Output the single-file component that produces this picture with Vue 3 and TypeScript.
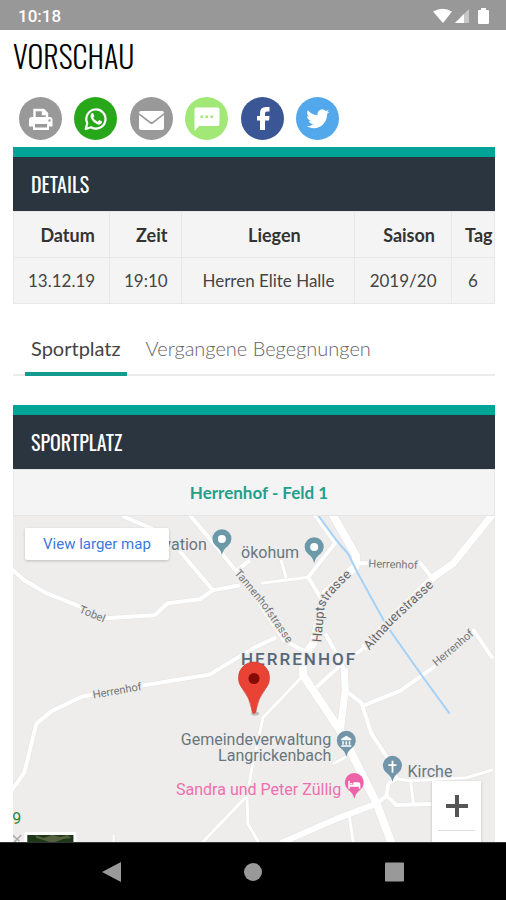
<script setup lang="ts">
import { ref } from 'vue'

interface Match {
  date: string
  time: string
  league: string
  season: string
  day: number
}

interface Road {
  d: string
  w: number
}

const columns = ['Datum', 'Zeit', 'Liegen', 'Saison', 'Tag']
const match: Match = {
  date: '13.12.19',
  time: '19:10',
  league: 'Herren Elite Halle',
  season: '2019/20',
  day: 6,
}

const tabs = ['Sportplatz', 'Vergangene Begegnungen']
const activeTab = ref(0)

const roads: Road[] = [
  { d: 'M10 567L25 580L47 593L80 606L92 616L105 618L155 615L168 603L200 599L213 590L240 585', w: 4 },
  { d: 'M123 516L153 529L175 545L213 590', w: 4 },
  { d: 'M189 514L217 547L237 572L253 594L284 640L303 650', w: 4 },
  { d: 'M236 571L250 560', w: 4 },
  { d: 'M314 514L335 543L308 577L322 600', w: 4 },
  { d: 'M261 583L308 577M281 560L286 578', w: 3 },
  { d: 'M332 514L356 556L355 567L325 593L321 610L313 643L303 657L303 675L340 730L376 802L391 842', w: 8 },
  { d: 'M356 563L420 563L431 577', w: 4 },
  { d: 'M493 513L453 563L433 577L386 623L363 648', w: 7 },
  { d: 'M363 648L343 662L316 687', w: 4 },
  { d: 'M325 633L336 653L344 670', w: 4 },
  { d: 'M344 668L345 690L340 730', w: 7 },
  { d: 'M363 705L400 690L433 667L473 630L492 658', w: 4 },
  { d: 'M348 692L361 702L371 733L391 763L396 778L388 783L386 795L396 804L431 803', w: 4 },
  { d: 'M396 778L410 780L413 803M410 780L466 777L492 769', w: 3 },
  { d: 'M386 795L376 803', w: 4 },
  { d: 'M376 803L336 818L281 842', w: 6 },
  { d: 'M349 815L353 842', w: 3 },
  { d: 'M333 763L346 756', w: 3 },
  { d: 'M303 675L263 717L258 740L252 767L247 797L248 823L259 842M247 795L202 842', w: 3 },
  { d: 'M10 793L25 772L37 723L53 710L83 696L143 685L210 674L253 648L276 637', w: 4 },
  { d: 'M114 834L114 842', w: 2 },
]
</script>

<template>
  <div class="screen">
    <div class="status">
      <span>10:18</span>
      <svg class="status-icons" viewBox="0 0 58 18" aria-hidden="true">
        <path d="M1 4.500Q10.500 -1 20 4.500L11 16Z" />
        <path d="M23 16L37 2V16Z" opacity=".45" />
        <path d="M23 16L32 7V16Z" />
        <path d="M47 3H49V1H54V3H56Q57 3 57 4V16Q57 17 56 17H47Q46 17 46 16V4Q46 3 47 3Z" />
      </svg>
    </div>

    <main class="page">
      <h1>VORSCHAU</h1>

      <nav class="share" aria-label="Teilen">
        <a href="#" class="grey" aria-label="Drucken">
          <svg viewBox="0 0 43 43">
            <path d="M15.500 22V13H24.500L28 16.500V22M24 13V17H28" fill="none" stroke="#fff" stroke-width="2.400" />
            <path fill-rule="evenodd" d="M13 20H30.500Q33.500 20 33.500 23V29.500H30V33H14V29.500H10V23Q10 20 13 20ZM16 27V30.500H28V27ZM30.500 22.300A1.200 1.200 0 1 0 30.500 24.700A1.200 1.200 0 1 0 30.500 22.300Z" />
          </svg>
        </a>
        <a href="#" class="whatsapp" aria-label="WhatsApp">
          <svg viewBox="0 0 43 43">
            <path d="M11.700 32L13.300 26.300A9.600 9.600 0 1 1 17 30.300Z" fill="none" stroke="#fff" stroke-width="2.200" stroke-linejoin="round" />
            <path d="M17.600 16.300Q18.900 15.600 19.400 16.800L20.300 19Q20.300 19.600 19.200 20.700Q20.800 23.700 23.700 24.700L25.200 23.100L28 24.500Q28.400 26.700 26 27.600Q23.600 28.300 19.500 24.800Q14.600 19.500 17.600 16.300Z" />
          </svg>
        </a>
        <a href="#" class="grey" aria-label="E-Mail">
          <svg viewBox="0 0 43 43">
            <path d="M11 14H32Q34 14 34 16L22.500 24.800Q21.500 25.500 20.500 24.800L9 16Q9 14 11 14Z" />
            <path d="M9 18L20 26.500Q21.500 27.500 23 26.500L34 18V31Q34 33 32 33H11Q9 33 9 31Z" />
          </svg>
        </a>
        <a href="#" class="sms" aria-label="SMS">
          <svg viewBox="0 0 43 43">
            <path fill-rule="evenodd" d="M11 10.500H32.500Q34.500 10.500 34.500 12.500V27Q34.500 29 32.500 29H14L9.500 34V12.500Q9.500 10.500 11 10.500ZM15.500 18.500V21H18V18.500ZM20.500 18.500V21H23V18.500ZM25.500 18.500V21H28V18.500Z" />
          </svg>
        </a>
        <a href="#" class="facebook" aria-label="Facebook">
          <svg viewBox="0 0 43 43">
            <path d="M19 33V23.500H16V19H19V16Q19 10 25 10H28.500V14.500H26Q24 14.500 24 16.500V19H28.500L28 23.500H24V33Z" />
          </svg>
        </a>
        <a href="#" class="twitter" aria-label="Twitter">
          <svg viewBox="0 0 24 24">
            <path transform="translate(5.700 5.700) scale(.54)" d="M23.950 4.570a10 10 0 0 1-2.820.770 4.960 4.960 0 0 0 2.160-2.720c-.95.550-2 .950-3.120 1.180a4.920 4.920 0 0 0-8.380 4.480C7.690 8.090 4.070 6.130 1.640 3.160a4.820 4.820 0 0 0-.67 2.480c0 1.710.870 3.210 2.190 4.100a4.900 4.900 0 0 1-2.230-.62v.060a4.920 4.920 0 0 0 3.950 4.830 5 5 0 0 1-2.210.080 4.940 4.940 0 0 0 4.600 3.420A9.870 9.870 0 0 1 0 19.540a14 14 0 0 0 7.550 2.210c9.050 0 14-7.500 14-13.980 0-.21 0-.42-.02-.63a9.940 9.940 0 0 0 2.460-2.550z" />
          </svg>
        </a>
      </nav>

      <section>
        <h2>DETAILS</h2>
        <table>
          <thead>
            <tr>
              <th v-for="c in columns" :key="c" scope="col">{{ c }}</th>
            </tr>
          </thead>
          <tbody>
            <tr>
              <td>{{ match.date }}</td>
              <td>{{ match.time }}</td>
              <td>{{ match.league }}</td>
              <td>{{ match.season }}</td>
              <td>{{ match.day }}</td>
            </tr>
          </tbody>
        </table>
      </section>

      <div class="tabs" role="tablist">
        <button
          v-for="(t, i) in tabs"
          :key="t"
          type="button"
          role="tab"
          :aria-selected="activeTab === i"
          :class="{ active: activeTab === i }"
          @click="activeTab = i"
        >{{ t }}</button>
      </div>

      <section class="venue">
        <h2>SPORTPLATZ</h2>
        <p class="field"><a href="#">Herrenhof - Feld 1</a></p>
        <div class="map">
          <svg class="map-canvas" viewBox="13 516 482 325" preserveAspectRatio="xMidYMin slice">
            <defs>
              <path id="pin" d="M0 14Q-1.500 8 -6 5A9.500 9.500 0 1 1 6 5Q1.500 8 0 14Z" />
              <path id="tannen" d="M234 573L260 604L292 650" />
              <path id="haupt" d="M321 642L324 608Q327 596 362 566" />
              <path id="altnau" d="M369 650L391 625L445 575" />
            </defs>
            <rect x="13" y="516" width="482" height="325" fill="#eeedec" />
            <g class="road-edge">
              <path v-for="(r, i) in roads" :key="i" :d="r.d" :stroke-width="r.w + 1" />
            </g>
            <g class="roads">
              <path v-for="(r, i) in roads" :key="i" :d="r.d" :stroke-width="r.w" />
            </g>
            <path class="river" d="M317 514L336 540L348 554L357 572L386 625L422 676L449 713" />

            <g class="street">
              <text transform="translate(79 612) rotate(22)">Tobel</text>
              <text transform="translate(94 698) rotate(-10)">Herrenhof</text>
              <text transform="translate(368 567) rotate(2)">Herrenhof</text>
              <text transform="translate(436 666) rotate(-40)">Herrenhof</text>
              <text><textPath href="#tannen">Tannenhofstrasse</textPath></text>
            </g>
            <g class="street main">
              <text><textPath href="#haupt">Hauptstrasse</textPath></text>
              <text><textPath href="#altnau">Altnauerstrasse</textPath></text>
            </g>
            <text class="town" x="241" y="665">HERRENHOF</text>

            <g class="poi">
              <text x="207" y="550" text-anchor="end">vation</text>
              <text x="299" y="558" text-anchor="end">ökohum</text>
              <text x="331" y="744" text-anchor="end">Gemeindeverwaltung</text>
              <text x="331" y="760" text-anchor="end">Langrickenbach</text>
              <text x="407" y="776">Kirche</text>
              <text class="hotel" x="341" y="794" text-anchor="end">Sandra und Peter Züllig</text>
              <text class="park" x="13" y="823">9</text>
            </g>

            <g fill="#6c99a8">
              <use href="#pin" x="222" y="541" />
              <use href="#pin" x="314" y="549" />
            </g>
            <g fill="#fff">
              <circle cx="222" cy="539" r="4" />
              <circle cx="314" cy="547" r="4" />
            </g>
            <g fill="#7295aa">
              <use href="#pin" x="346" y="742" />
              <use href="#pin" x="392" y="767" />
            </g>
            <use href="#pin" x="354" y="784" fill="#ee62a8" />
            <path fill="#fff" d="M341 738L346 735L351 738V739.500H341ZM342 740.500H343.500V744H342ZM345.200 740.500H346.800V744H345.200ZM348.500 740.500H350V744H348.500ZM341 744.500H351V746H341Z" />
            <path fill="#fff" d="M391.200 760H393V763.500H396V765.300H393V772H391.200V765.300H388V763.500H391.200Z" />
            <path fill="#fff" d="M348 780H349.500V784H353V781.500H358Q360 781.500 360 783.500V788H358.500V786H349.500V788H348ZM350 782.300H352V783.500H350Z" />

            <ellipse cx="255" cy="713" rx="4" ry="2" fill="#bbb" />
            <path fill="#e94335" stroke="#c8382c" stroke-width=".6" d="M254 713Q252 713 251.500 708Q250 698 243 689Q238 683 238.500 677A15.500 15.500 0 0 1 269.500 677Q270 683 265 689Q258 698 256.500 708Q256 713 254 713Z" />
            <circle cx="254" cy="678" r="5.500" fill="#850b05" />

            <path d="M13 834L20 840M15 841L22 834" stroke="#aaa" stroke-width="1.500" />
            <rect x="25" y="831" width="52" height="14" rx="2" fill="#fff" />
            <rect x="28" y="834" width="46" height="11" fill="#1d3819" />
            <path d="M36 834L44 837L53 834L61 836L68 834L72 837L64 838L56 841H50L44 839L37 837Z" fill="#53613f" />
          </svg>
          <a class="larger" href="#">View larger map</a>
          <div class="zoom">
            <button type="button" aria-label="Vergrössern">
              <svg viewBox="0 0 22 22"><path d="M9 0H13V9H22V13H13V22H9V13H0V9H9Z" fill="#555" /></svg>
            </button>
          </div>
        </div>
      </section>
    </main>

    <div class="navbar">
      <button type="button" aria-label="Zurück"><svg viewBox="0 0 20 20"><path d="M1 10L20 0V20Z" /></svg></button>
      <button type="button" aria-label="Startseite"><svg viewBox="0 0 20 20"><circle cx="10" cy="10" r="9" /></svg></button>
      <button type="button" aria-label="Übersicht"><svg viewBox="0 0 20 20"><rect width="19" height="19" y=".5" rx="1" /></svg></button>
    </div>
  </div>
</template>

<style>
body {
  margin: 0;
  background: #fff;
}
</style>

<style scoped>
* {
  box-sizing: border-box;
}
.screen {
  display: flex;
  flex-direction: column;
  height: 100vh;
  overflow: hidden;
  font-family: Lato, sans-serif;
  color: #333;
}
.status {
  display: flex;
  flex: none;
  justify-content: space-between;
  align-items: center;
  height: 30px;
  padding: 2px 16px 0 18px;
  background: #989898;
  color: #fff;
  font: 500 17px Roboto, sans-serif;
}
.status-icons {
  width: 58px;
  height: 18px;
  fill: #fff;
}
.page {
  display: flex;
  flex: 1;
  flex-direction: column;
  min-height: 0;
  padding: 0 11px 0 13px;
}
h1,
h2 {
  margin: 0;
  font-family: Oswald, 'Liberation Sans Narrow', 'Roboto Condensed', sans-serif;
  font-weight: 400;
}
h1 {
  padding-top: 8px;
  font-size: 30px;
  font-weight: 300;
  line-height: 36px;
  color: #000;
}
h2 {
  padding: 0 18px;
  border-top: 10px solid #00a496;
  background: #2b3540;
  color: #fff;
  font-size: 20px;
  line-height: 54px;
}
.share {
  display: flex;
  flex: none;
  justify-content: space-between;
  max-width: 320px;
  margin: 23px 0 7px 6px;
}
.share a {
  width: 43px;
  height: 43px;
  border-radius: 50%;
}
.share svg {
  display: block;
  fill: #fff;
}
.grey {
  background: #999;
}
.whatsapp {
  background: #29a71a;
}
.sms {
  background: #a1e877;
}
.facebook {
  background: #3a5695;
}
.twitter {
  background: #53a8ec;
}
table {
  width: 100%;
  border-collapse: collapse;
  background: #f4f4f4;
  font-size: 17px;
}
th,
td {
  height: 46px;
  padding: 0;
  border: 1px solid #e8e8e8;
  text-align: center;
}
td {
  color: #444;
}
th {
  padding-left: 12px;
  font-size: 18px;
  font-weight: 700;
}
th:nth-child(1) {
  width: 20%;
}
th:nth-child(2) {
  width: 15%;
}
th:nth-child(3) {
  width: 36%;
}
th:nth-child(4) {
  width: 20%;
}
.tabs {
  display: flex;
  flex: none;
  gap: 13px;
  margin: 20px 0 29px;
  padding-left: 12px;
  border-bottom: 2px solid #ececec;
}
.tabs button {
  height: 52px;
  margin-bottom: -2px;
  padding: 0 6px;
  border: 0;
  border-bottom: 4px solid transparent;
  background: none;
  color: #666;
  font: 300 20px Lato, sans-serif;
}
.tabs .active {
  border-color: #129b8f;
  color: #444;
  font-weight: 400;
}
.venue {
  display: flex;
  flex: 1;
  flex-direction: column;
  min-height: 0;
}
.field {
  margin: 0;
  padding-left: 10px;
  border: 1px solid #e6e6e6;
  background: #f4f4f4;
  font-size: 17px;
  font-weight: 700;
  line-height: 45px;
  text-align: center;
}
.field a {
  color: #1fa08c;
  text-decoration: none;
}
.map {
  position: relative;
  flex: 1;
  min-height: 0;
  overflow: hidden;
}
.map-canvas {
  display: block;
  width: 100%;
  height: 100%;
  font-family: Roboto, sans-serif;
}
.road-edge path,
.roads path {
  fill: none;
  stroke: #e3e3e3;
  stroke-linejoin: round;
}
.roads path {
  stroke: #fff;
}
.river {
  fill: none;
  stroke: #a5d2f8;
  stroke-width: 2;
}
.map-canvas text {
  stroke: #eeedec;
  stroke-width: 3px;
  stroke-linejoin: round;
  paint-order: stroke;
}
.street {
  fill: #777;
  font-size: 11px;
}
.main {
  fill: #666;
  font-size: 13px;
}
.town {
  fill: #54687a;
  font-size: 17px;
  font-weight: 500;
  letter-spacing: 2px;
}
.poi {
  fill: #68777e;
  font-size: 16px;
}
.hotel {
  fill: #ee6fae;
}
.park {
  fill: #2c8a35;
}
.larger {
  position: absolute;
  top: 12px;
  left: 12px;
  padding: 0 18px;
  border-radius: 2px;
  background: #fff;
  box-shadow: 0 1px 3px #0003;
  color: #3b78e0;
  font: 15px/32px Roboto, sans-serif;
  text-decoration: none;
}
.zoom {
  position: absolute;
  right: 14px;
  bottom: 0;
  height: 61px;
  padding: 0 6px;
  background: #fff;
  box-shadow: 0 1px 3px #0003;
}
.zoom button {
  display: grid;
  place-items: center;
  width: 37px;
  height: 50px;
  padding: 0;
  border: 0;
  border-bottom: 1px solid #ddd;
  background: none;
}
.zoom svg {
  width: 22px;
}
.navbar {
  display: flex;
  flex: none;
  justify-content: space-between;
  align-items: center;
  height: 58px;
  padding: 0 20%;
  border-top: 1px solid #333;
  background: #000;
}
.navbar button {
  display: grid;
  padding: 0;
  border: 0;
  background: none;
}
.navbar svg {
  width: 20px;
  fill: #999;
}
</style>
